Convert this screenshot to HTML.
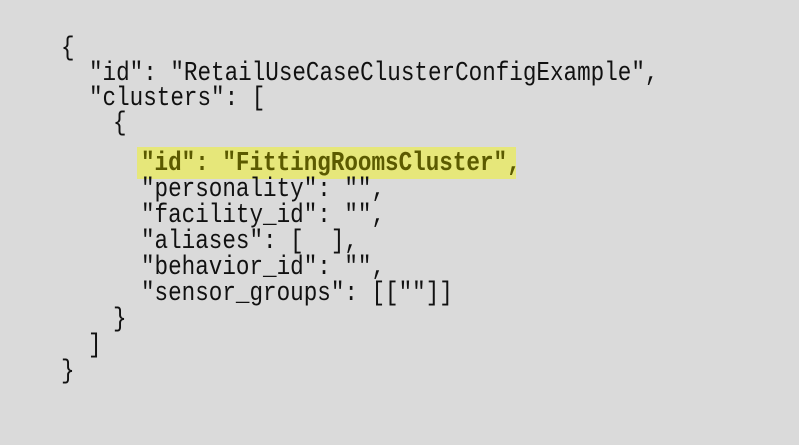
<!DOCTYPE html>
<html><head><style>
body{margin:0;width:799px;height:445px;background:#dadada;overflow:hidden;position:relative;font-family:"Liberation Mono",monospace;font-size:22.6px;color:#111;}
.l{position:absolute;white-space:pre;line-height:26px;height:26px;transform:scaleY(1.18);transform-origin:0 50%;}
.hl{position:absolute;left:137px;top:147px;width:379px;height:32px;background:#e6e77a;}
.b{font-weight:bold;color:#5b5a00;}
</style></head><body>
<div class="hl"></div>
<div class="l" style="left:61px;top:35px">{</div>
<div class="l" style="left:89px;top:60px">"id": "RetailUseCaseClusterConfigExample",</div>
<div class="l" style="left:89px;top:85px">"clusters": [</div>
<div class="l" style="left:113px;top:110px">{</div>
<div class="l b" style="left:141px;top:150px">"id": "FittingRoomsCluster",</div>
<div class="l" style="left:141px;top:176px">"personality": "",</div>
<div class="l" style="left:141px;top:202px">"facility_id": "",</div>
<div class="l" style="left:141px;top:228px">"aliases": [  ],</div>
<div class="l" style="left:141px;top:254px">"behavior_id": "",</div>
<div class="l" style="left:141px;top:280px">"sensor_groups": [[""]]</div>
<div class="l" style="left:113px;top:306px">}</div>
<div class="l" style="left:88px;top:332px">]</div>
<div class="l" style="left:61px;top:358px">}</div>
</body></html>
